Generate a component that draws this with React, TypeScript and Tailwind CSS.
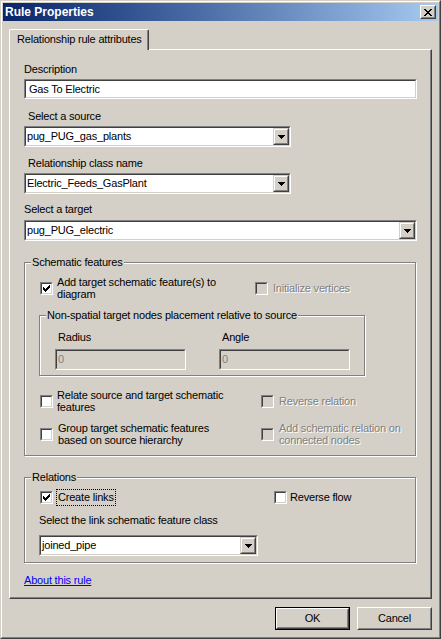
import type { ReactNode } from "react";

type BoxProps = { className?: string; innerClassName?: string; children?: ReactNode };

function Sunken({ className = "", innerClassName = "", children }: BoxProps) {
  return (
    <div className={`border border-t-[#808080] border-l-[#808080] border-r-white border-b-white ${className}`}>
      <div className={`h-full border border-t-[#404040] border-l-[#404040] border-r-[#d4d0c8] border-b-[#d4d0c8] ${innerClassName}`}>
        {children}
      </div>
    </div>
  );
}

function Raised({ className = "", innerClassName = "", children }: BoxProps) {
  return (
    <div className={`border border-t-white border-l-white border-r-[#404040] border-b-[#404040] ${className}`}>
      <div className={`h-full border border-t-[#d4d0c8] border-l-[#d4d0c8] border-r-[#808080] border-b-[#808080] ${innerClassName}`}>
        {children}
      </div>
    </div>
  );
}

const checkRows: [number, number, number][] = [
  [6, 0, 1],
  [5, 1, 2],
  [0, 2, 1],
  [4, 2, 3],
  [0, 3, 2],
  [3, 3, 3],
  [0, 4, 5],
  [1, 5, 3],
  [2, 6, 1],
];

function CheckMark() {
  return (
    <svg width="7" height="7" viewBox="0 0 7 7" shapeRendering="crispEdges">
      {checkRows.map(([x, y, w], i) => (
        <rect key={i} x={x} y={y} width={w} height={1} fill="#000" />
      ))}
    </svg>
  );
}

function CheckBox({ checked = false, disabled = false }: { checked?: boolean; disabled?: boolean }) {
  return (
    <Sunken
      className="h-[13px] w-[13px] shrink-0"
      innerClassName={`flex items-center justify-center ${disabled ? "bg-[#d4d0c8]" : "bg-white"}`}
    >
      {checked && <CheckMark />}
    </Sunken>
  );
}

function ArrowDown() {
  return (
    <svg width="7" height="4" viewBox="0 0 7 4" shapeRendering="crispEdges">
      <rect x="0" y="0" width="7" height="1" fill="#000" />
      <rect x="1" y="1" width="5" height="1" fill="#000" />
      <rect x="2" y="2" width="3" height="1" fill="#000" />
      <rect x="3" y="3" width="1" height="1" fill="#000" />
    </svg>
  );
}

function Combo({ value, className = "" }: { value: string; className?: string }) {
  return (
    <Sunken className={`h-[21px] ${className}`} innerClassName="flex bg-white">
      <div className="flex flex-1 items-center pl-[1px]">{value}</div>
      <div className="h-full w-[16px] border border-t-[#d4d0c8] border-l-[#d4d0c8] border-r-[#404040] border-b-[#404040]">
        <div className="flex h-full items-center justify-center border border-t-white border-l-white border-r-[#808080] border-b-[#808080] bg-[#d4d0c8]">
          <ArrowDown />
        </div>
      </div>
    </Sunken>
  );
}

function GroupBox({ title, className = "", children }: { title: string; className?: string; children?: ReactNode }) {
  return (
    <div className={`relative flex flex-col items-start border border-[#808080] shadow-[inset_1px_1px_0_#fff,1px_1px_0_#fff] ${className}`}>
      <span className="absolute -top-[7px] left-[6px] bg-[#d4d0c8] px-[1px] leading-[13px]">{title}</span>
      {children}
    </div>
  );
}

const disabledText = "text-[#808080] [text-shadow:1px_1px_0_#fff]";

function CloseGlyph() {
  const rows: [number, number, number][] = [
    [0, 0, 2], [6, 0, 2],
    [1, 1, 2], [5, 1, 2],
    [2, 2, 4],
    [3, 3, 2],
    [2, 4, 4],
    [1, 5, 2], [5, 5, 2],
    [0, 6, 2], [6, 6, 2],
  ];
  return (
    <svg width="8" height="7" viewBox="0 0 8 7" shapeRendering="crispEdges">
      {rows.map(([x, y, w], i) => (
        <rect key={i} x={x} y={y} width={w} height={1} fill="#000" />
      ))}
    </svg>
  );
}

export default function App() {
  return (
    <div className="h-[639px] w-[441px] border border-t-[#d4d0c8] border-l-[#d4d0c8] border-r-[#404040] border-b-[#404040] bg-[#d4d0c8] font-['Liberation_Sans',Arial,sans-serif] text-[11px] leading-[13px] tracking-[-0.2px] text-black">
      <div className="flex h-full flex-col border border-t-white border-l-white border-r-[#808080] border-b-[#808080] p-px">
        {/* title bar */}
        <div className="flex h-[18px] items-center justify-between bg-linear-to-r from-[#0a246a] to-[#a6caf0] px-[2px]">
          <span className="text-[12px] font-bold leading-[18px] tracking-normal text-white">Rule Properties</span>
          <Raised className="h-[14px] w-[16px]" innerClassName="flex items-center justify-center bg-[#d4d0c8] pr-px">
            <CloseGlyph />
          </Raised>
        </div>

        {/* tab */}
        <div className="relative z-10 -mb-px ml-[6px] mt-[8px] h-[21px] w-[140px] rounded-t-[2px] border-t border-l border-r border-t-white border-l-white border-r-[#404040] bg-[#d4d0c8] pl-[7px] pt-[3px] shadow-[inset_-1px_0_0_#808080]">
          Relationship rule attributes
        </div>

        {/* panel */}
        <div className="ml-[6px] flex h-[550px] w-[423px] flex-col items-start border border-t-white border-l-white border-r-[#404040] border-b-[#404040] pl-[14px] shadow-[inset_-1px_-1px_0_#808080]">
          <div className="mt-[13px]">Description</div>
          <Sunken className="mt-[3px] h-[20px] w-[393px]" innerClassName="flex items-center bg-white pl-[3px]">
            Gas To Electric
          </Sunken>

          <div className="ml-[4px] mt-[11px]">Select a source</div>
          <Combo className="mt-[3px] w-[267px]" value="pug_PUG_gas_plants" />

          <div className="ml-[4px] mt-[10px]">Relationship class name</div>
          <Combo className="mt-[3px] w-[267px]" value="Electric_Feeds_GasPlant" />

          <div className="mt-[9px]">Select a target</div>
          <Combo className="mt-[4px] w-[393px]" value="pug_PUG_electric" />

          <GroupBox title="Schematic features" className="mt-[21px] h-[194px] w-[392px]">
            <div className="ml-[15px] mt-[13px] flex items-center">
              <div className="flex w-[215px] items-center gap-[4px]">
                <CheckBox checked />
                <span className="whitespace-nowrap leading-[12px]">
                  Add target schematic feature(s) to
                  <br />
                  diagram
                </span>
              </div>
              <div className="flex items-center gap-[5px]">
                <CheckBox disabled />
                <span className={disabledText}>Initialize vertices</span>
              </div>
            </div>

            <GroupBox
              title="Non-spatial target nodes placement relative to source"
              className="ml-[14px] mt-[15px] h-[61px] w-[326px]"
            >
              <div className="ml-[15px] mt-[15px] flex gap-[33px]">
                {["Radius", "Angle"].map((label) => (
                  <div key={label} className="flex w-[131px] flex-col">
                    <span className="pl-[3px]">{label}</span>
                    <Sunken className="mt-[5px] h-[21px]" innerClassName="flex items-center bg-[#d4d0c8] pl-[1px] text-[#808080]">
                      0
                    </Sunken>
                  </div>
                ))}
              </div>
            </GroupBox>

            <div className="ml-[15px] mt-[13px] flex items-center">
              <div className="flex w-[221px] items-center gap-[4px]">
                <CheckBox />
                <span className="whitespace-nowrap leading-[12px]">
                  Relate source and target schematic
                  <br />
                  features
                </span>
              </div>
              <div className="flex items-center gap-[5px]">
                <CheckBox disabled />
                <span className={disabledText}>Reverse relation</span>
              </div>
            </div>

            <div className="ml-[15px] mt-[9px] flex items-center">
              <div className="flex w-[221px] items-center gap-[5px]">
                <CheckBox />
                <span className="whitespace-nowrap leading-[12px]">
                  Group target schematic features
                  <br />
                  based on source hierarchy
                </span>
              </div>
              <div className="flex items-center gap-[5px]">
                <CheckBox disabled />
                <span className={`whitespace-nowrap leading-[12px] ${disabledText}`}>
                  Add schematic relation on
                  <br />
                  connected nodes
                </span>
              </div>
            </div>
          </GroupBox>

          <GroupBox title="Relations" className="mt-[21px] h-[86px] w-[392px]">
            <div className="ml-[15px] mt-[11px] flex items-center">
              <div className="flex w-[234px] items-center gap-[3px]">
                <CheckBox checked />
                <span className="border border-dotted border-black px-[1px] py-px leading-[13px]">Create links</span>
              </div>
              <div className="flex items-center gap-[3px]">
                <CheckBox />
                <span>Reverse flow</span>
              </div>
            </div>
            <div className="ml-[14px] mt-[8px]">Select the link schematic feature class</div>
            <Combo className="ml-[14px] mt-[8px] w-[219px]" value="joined_pipe" />
          </GroupBox>

          <a href="#" className="mt-[11px] text-[#0000ff] underline">
            About this rule
          </a>
        </div>

        {/* buttons */}
        <div className="mt-[8px] flex justify-end gap-[7px] pr-[6px]">
          <div className="h-[23px] w-[75px] border border-black">
            <Raised className="h-full" innerClassName="flex items-center justify-center bg-[#d4d0c8]">
              OK
            </Raised>
          </div>
          <Raised className="h-[23px] w-[75px]" innerClassName="flex items-center justify-center bg-[#d4d0c8]">
            Cancel
          </Raised>
        </div>
      </div>
    </div>
  );
}
